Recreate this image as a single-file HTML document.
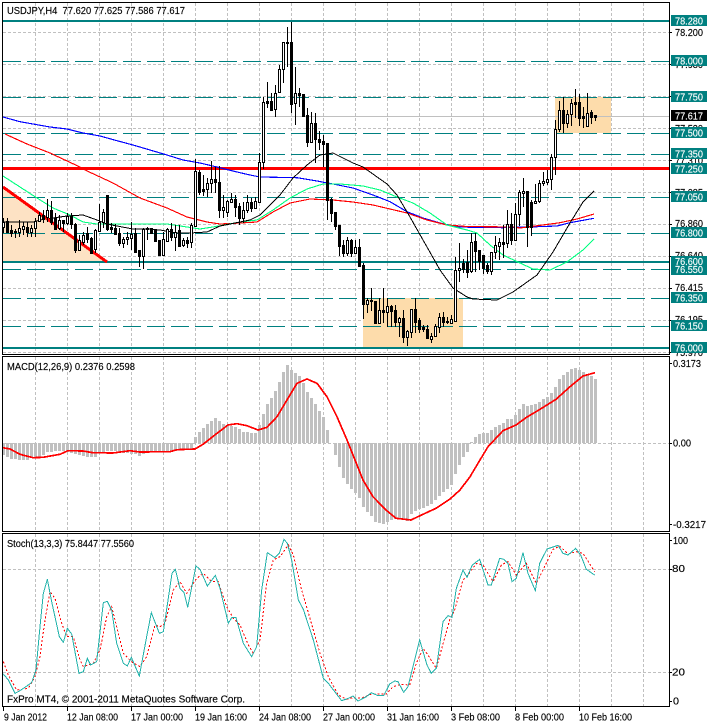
<!DOCTYPE html>
<html><head><meta charset="utf-8"><title>USDJPY,H4</title>
<style>
html,body{margin:0;padding:0;background:#fff;width:707px;height:724px;overflow:hidden}
svg{display:block}
text{font-family:"Liberation Sans",sans-serif;font-size:10.5px;fill:#000;stroke:#000;stroke-width:.15px}
text.wt{fill:#fff;stroke:#fff}
</style></head><body>
<svg width="707" height="724" viewBox="0 0 707 724" xmlns="http://www.w3.org/2000/svg" shape-rendering="crispEdges">
<!-- grid -->
<g fill="none" stroke="#c0c0c0" stroke-dasharray="3 2">
<path d="M35.5 3V353M67.5 3V353M99.5 3V353M131.5 3V353M163.5 3V353M195.5 3V353M227.5 3V353M259.5 3V353M291.5 3V353M323.5 3V353M355.5 3V353M387.5 3V353M419.5 3V353M451.5 3V353M483.5 3V353M515.5 3V353M547.5 3V353M579.5 3V353M611.5 3V353M643.5 3V353"/>
<path d="M3 32.5H669M3 64.5H669M3 96.5H669M3 128.5H669M3 160.5H669M3 192.5H669M3 224.5H669M3 256.5H669M3 288.5H669M3 320.5H669M3 352.5H669"/>
<path d="M35.5 357V531M67.5 357V531M99.5 357V531M131.5 357V531M163.5 357V531M195.5 357V531M227.5 357V531M259.5 357V531M291.5 357V531M323.5 357V531M355.5 357V531M387.5 357V531M419.5 357V531M451.5 357V531M483.5 357V531M515.5 357V531M547.5 357V531M579.5 357V531M611.5 357V531M643.5 357V531"/>
<path d="M3 443.5H669"/>
<path d="M35.5 534V706M67.5 534V706M99.5 534V706M131.5 534V706M163.5 534V706M195.5 534V706M227.5 534V706M259.5 534V706M291.5 534V706M323.5 534V706M355.5 534V706M387.5 534V706M419.5 534V706M451.5 534V706M483.5 534V706M515.5 534V706M547.5 534V706M579.5 534V706M611.5 534V706M643.5 534V706"/>
<path d="M3 569.5H669M3 672.5H669"/>
</g>
<!-- boxes -->
<polygon points="3,187 107,262 3,262" fill="#fde2c4"/>
<rect x="363" y="298" width="100" height="50" fill="#fddcab"/>
<rect x="555" y="97" width="56" height="36" fill="#fddcab"/>
<!-- price line -->
<path d="M3 116.5H669" stroke="#c0c0c0" fill="none"/>
<!-- levels -->
<g fill="none" stroke="#008080">
<path stroke-dasharray="18 6" d="M3 61.5H669M3 97.5H669M3 133.5H669M3 154.5H669M3 197.5H669M3 233.5H669M3 269.5H669M3 298.5H669M3 326.5H669"/>
<path stroke-width="2" d="M3 21H669M3 262H669M3 348H669"/>
</g>
<path d="M3 168.5H669" stroke="#f00" stroke-width="3" fill="none"/>
<!-- moving averages -->
<g fill="none" stroke-linejoin="round">
<polyline stroke="#0000ff" stroke-width="1.15" points="3,117 20,121.7 33,124 50,127 67,129 83,133 100,136 117,140.7 133,145 150,150 167,155 183,160 200,163 217,167 233,171 240,172.7 250,175 260,177 297,177.7 317,181 333,184 353,188 373,195 390,201.7 407,211.7 423,218 440,223 457,226.7 470,227.3 503,227.7 537,226.7 557,226 570,222.7 594,218.3"/>
<polyline stroke="#ff0000" stroke-width="1.15" points="5,134 27,144 50,153 80,167 85,170 113,183 140,198 167,208 187,217 207,222 220,224 240,223 257,222 273,212 290,203 310,199 333,200 353,202 373,205 390,209 407,213 427,220 447,225 467,226.5 513,227 520,228 543,225 560,222.7 577,219 594,214"/>
<polyline stroke="#00ff7f" stroke-width="1.1" points="3,176 20,187 37,198 53,208 70,215 83,222 97,224 133,224 167,224 187,227 200,229 213,227 240,222 257,220 273,210 290,198 307,189 323,184 340,184 363,186 380,190 397,197 413,203 430,213 447,225 467,230 477,233 490,245 503,255 520,263 533,269 550,270 567,262 583,250 594,239"/>
<polyline stroke="#000" stroke-width="1" points="3,222 33,222 40,220 53,218 67,216 83,215 97,220 107,224 117,226 133,229 147,229 160,230 177,233 190,233 207,232 220,226 240,222 250,220 260,215 280,195 293,178 307,165 320,155 333,153 353,163 363,167 387,184 397,195 410,217 427,247 440,270 453,288 467,297 473,299 497,300 513,292 537,275 553,252 570,223 583,202 594,191"/>
</g>
<!-- trend line -->
<path d="M3 187L107 262" stroke="#f00" stroke-width="3" fill="none"/>
<!-- wicks -->
<path fill="none" stroke="#000" d="M3.5 218V233M7.5 218V233M11.5 225V237M15.5 229V238M19.5 220V237M23.5 222V235M27.5 222V237M31.5 225V237M35.5 218V237M39.5 212V222M43.5 210V223M47.5 199V222M51.5 201V225M55.5 213V230M59.5 215V230M63.5 220V232M67.5 213V225M71.5 213V229M75.5 223V253M79.5 235V250M83.5 232V245M87.5 227V243M91.5 237V253M95.5 229V253M99.5 204V231M103.5 209V228M107.5 195V231M111.5 223V233M115.5 224V235M119.5 228V246M123.5 237V248M127.5 232V245M131.5 222V250M135.5 228V253M139.5 250V267M143.5 228V269M147.5 227V240M151.5 228V233M155.5 229V242M159.5 240V256M163.5 232V256M167.5 228V242M171.5 223V241M175.5 225V251M179.5 225V246M183.5 238V247M187.5 237V248M191.5 223V248M195.5 159V227M199.5 170V195M203.5 175V196M207.5 178V197M211.5 161V193M215.5 167V193M219.5 166V218M223.5 195V218M227.5 200V217M231.5 193V203M235.5 195V217M239.5 203V225M243.5 202V223M247.5 195V213M251.5 198V212M255.5 197V208M259.5 153V202M263.5 97V169M267.5 82V108M271.5 93V111M275.5 85V117M279.5 65V92M283.5 42V83M287.5 27V67M291.5 22V113M295.5 67V125M299.5 88V107M303.5 94V117M307.5 108V147M311.5 112V142M315.5 113V163M319.5 131V150M323.5 135V167M327.5 143V220M331.5 198V222M335.5 212V230M339.5 225V256M343.5 240V257M347.5 237V256M351.5 239V257M355.5 240V253M359.5 239V267M363.5 263V319M367.5 298V313M371.5 288V311M375.5 301V324M379.5 298V323M383.5 288V323M387.5 298V327M391.5 305V327M395.5 305V327M399.5 317V337M403.5 310V343M407.5 330V346M411.5 309V338M415.5 298V333M419.5 318V333M423.5 325V332M427.5 325V339M431.5 333V343M435.5 324V337M439.5 313V333M443.5 312V327M447.5 317V324M451.5 315V324M455.5 257V321M459.5 243V282M463.5 259V273M467.5 250V278M471.5 233V273M475.5 233V272M479.5 250V270M483.5 255V274M487.5 263V274M491.5 252V275M495.5 236V259M499.5 238V260M503.5 225V258M507.5 210V248M511.5 213V245M515.5 203V240M519.5 190V226M523.5 178V207M527.5 191V247M531.5 200V236M535.5 184V203M539.5 180V203M543.5 172V186M547.5 170V185M551.5 154V190M555.5 120V175M559.5 101V132M563.5 97V133M567.5 110V128M571.5 99V126M575.5 89V118M579.5 94V126M583.5 107V128M587.5 93V127M591.5 110V124M595.5 115V121"/>
<!-- white bodies -->
<path fill="#fff" stroke="#000" d="M2.5 222.5h2V227.5h-2zM18.5 228.5h2V232.5h-2zM22.5 226.5h2V229.5h-2zM30.5 228.5h2V232.5h-2zM34.5 221.5h2V228.5h-2zM38.5 215.5h2V221.5h-2zM46.5 210.5h2V217.5h-2zM58.5 220.5h2V228.5h-2zM66.5 216.5h2V223.5h-2zM78.5 240.5h2V250.5h-2zM82.5 235.5h2V242.5h-2zM94.5 230.5h2V249.5h-2zM98.5 222.5h2V231.5h-2zM102.5 212.5h2V222.5h-2zM122.5 239.5h2V243.5h-2zM126.5 237.5h2V239.5h-2zM130.5 234.5h2V238.5h-2zM142.5 229.5h2V256.5h-2zM162.5 239.5h2V255.5h-2zM166.5 229.5h2V241.5h-2zM174.5 232.5h2V237.5h-2zM182.5 240.5h2V245.5h-2zM190.5 225.5h2V242.5h-2zM194.5 171.5h2V226.5h-2zM206.5 183.5h2V189.5h-2zM210.5 179.5h2V183.5h-2zM222.5 207.5h2V210.5h-2zM226.5 201.5h2V212.5h-2zM230.5 199.5h2V202.5h-2zM242.5 210.5h2V218.5h-2zM246.5 202.5h2V210.5h-2zM254.5 201.5h2V208.5h-2zM258.5 162.5h2V202.5h-2zM262.5 102.5h2V162.5h-2zM274.5 93.5h2V109.5h-2zM278.5 69.5h2V92.5h-2zM282.5 42.5h2V69.5h-2zM294.5 93.5h2V103.5h-2zM310.5 123.5h2V142.5h-2zM346.5 240.5h2V253.5h-2zM354.5 247.5h2V253.5h-2zM366.5 300.5h2V304.5h-2zM378.5 310.5h2V323.5h-2zM386.5 306.5h2V312.5h-2zM398.5 318.5h2V322.5h-2zM406.5 331.5h2V337.5h-2zM410.5 309.5h2V332.5h-2zM430.5 336.5h2V339.5h-2zM434.5 326.5h2V336.5h-2zM438.5 317.5h2V327.5h-2zM450.5 319.5h2V323.5h-2zM454.5 270.5h2V321.5h-2zM458.5 268.5h2V270.5h-2zM470.5 242.5h2V271.5h-2zM490.5 252.5h2V271.5h-2zM494.5 245.5h2V252.5h-2zM498.5 242.5h2V246.5h-2zM506.5 224.5h2V243.5h-2zM514.5 214.5h2V240.5h-2zM518.5 192.5h2V214.5h-2zM522.5 191.5h2V193.5h-2zM534.5 201.5h2V203.5h-2zM538.5 183.5h2V201.5h-2zM542.5 181.5h2V183.5h-2zM546.5 179.5h2V182.5h-2zM550.5 157.5h2V179.5h-2zM554.5 129.5h2V157.5h-2zM558.5 110.5h2V129.5h-2zM566.5 114.5h2V123.5h-2zM570.5 103.5h2V114.5h-2zM586.5 113.5h2V126.5h-2z"/>
<!-- black bodies -->
<path fill="#000" stroke="#000" d="M6.5 221.5h2V232.5h-2zM10.5 230.5h2V233.5h-2zM14.5 231.5h2V232.5h-2zM26.5 227.5h2V232.5h-2zM42.5 215.5h2V218.5h-2zM50.5 210.5h2V222.5h-2zM54.5 218.5h2V229.5h-2zM62.5 220.5h2V223.5h-2zM70.5 216.5h2V224.5h-2zM74.5 224.5h2V250.5h-2zM86.5 233.5h2V239.5h-2zM90.5 238.5h2V253.5h-2zM106.5 195.5h2V229.5h-2zM110.5 227.5h2V229.5h-2zM114.5 228.5h2V234.5h-2zM118.5 233.5h2V243.5h-2zM134.5 233.5h2V252.5h-2zM138.5 250.5h2V256.5h-2zM146.5 228.5h2V229.5h-2zM150.5 228.5h2V233.5h-2zM154.5 230.5h2V241.5h-2zM158.5 240.5h2V255.5h-2zM170.5 229.5h2V237.5h-2zM178.5 230.5h2V246.5h-2zM186.5 240.5h2V243.5h-2zM198.5 172.5h2V192.5h-2zM202.5 189.5h2V191.5h-2zM214.5 179.5h2V182.5h-2zM218.5 182.5h2V210.5h-2zM234.5 199.5h2V207.5h-2zM238.5 206.5h2V218.5h-2zM250.5 202.5h2V208.5h-2zM266.5 101.5h2V103.5h-2zM270.5 101.5h2V110.5h-2zM286.5 42.5h2V43.5h-2zM290.5 42.5h2V104.5h-2zM298.5 93.5h2V95.5h-2zM302.5 94.5h2V116.5h-2zM306.5 115.5h2V142.5h-2zM314.5 123.5h2V139.5h-2zM318.5 139.5h2V142.5h-2zM322.5 141.5h2V144.5h-2zM326.5 143.5h2V200.5h-2zM330.5 199.5h2V213.5h-2zM334.5 212.5h2V226.5h-2zM338.5 225.5h2V246.5h-2zM342.5 245.5h2V253.5h-2zM350.5 240.5h2V253.5h-2zM358.5 247.5h2V266.5h-2zM362.5 265.5h2V304.5h-2zM370.5 300.5h2V301.5h-2zM374.5 301.5h2V323.5h-2zM382.5 310.5h2V312.5h-2zM390.5 306.5h2V311.5h-2zM394.5 310.5h2V322.5h-2zM402.5 318.5h2V337.5h-2zM414.5 309.5h2V322.5h-2zM418.5 320.5h2V329.5h-2zM422.5 327.5h2V329.5h-2zM426.5 329.5h2V338.5h-2zM442.5 317.5h2V322.5h-2zM446.5 321.5h2V322.5h-2zM462.5 263.5h2V269.5h-2zM466.5 262.5h2V272.5h-2zM474.5 241.5h2V251.5h-2zM478.5 250.5h2V261.5h-2zM482.5 255.5h2V268.5h-2zM486.5 265.5h2V271.5h-2zM502.5 242.5h2V244.5h-2zM510.5 224.5h2V240.5h-2zM526.5 191.5h2V227.5h-2zM530.5 202.5h2V227.5h-2zM562.5 110.5h2V123.5h-2zM574.5 102.5h2V104.5h-2zM578.5 102.5h2V118.5h-2zM582.5 116.5h2V118.5h-2zM590.5 112.5h2V117.5h-2zM594.5 115.5h2V117.5h-2z"/>
<!-- MACD bars -->
<path fill="none" stroke="#c0c0c0" stroke-width="3" d="M3.5 443V455M7.5 443V457M11.5 443V459M15.5 443V459M19.5 443V460M23.5 443V460M27.5 443V460M31.5 443V458M35.5 443V457M39.5 443V457M43.5 443V455M47.5 443V452M51.5 443V452M55.5 443V451M59.5 443V451M63.5 443V451M67.5 443V452M71.5 443V453M75.5 443V454M79.5 443V455M83.5 443V456M87.5 443V457M91.5 443V457M95.5 443V457M99.5 443V453M103.5 443V452M107.5 443V451M111.5 443V451M115.5 443V451M119.5 443V452M123.5 443V453M127.5 443V453M131.5 443V454M135.5 443V454M139.5 443V456M143.5 443V454M147.5 443V453M151.5 443V451M155.5 443V451M159.5 443V451M163.5 443V451M167.5 443V451M171.5 443V451M175.5 443V451M179.5 443V449M183.5 443V449M187.5 443V449M191.5 443V449M195.5 443V437M199.5 443V432M203.5 443V428M207.5 443V424M211.5 443V421M215.5 443V418M219.5 443V421M223.5 443V424M227.5 443V425M231.5 443V426M235.5 443V427M239.5 443V429M243.5 443V432M247.5 443V432M251.5 443V433M255.5 443V433M259.5 443V425M263.5 443V414M267.5 443V404M271.5 443V398M275.5 443V391M279.5 443V382M283.5 443V372M287.5 443V365M291.5 443V370M295.5 443V373M299.5 443V376M303.5 443V383M307.5 443V392M311.5 443V398M315.5 443V404M319.5 443V411M323.5 443V417M327.5 443V430M335.5 443V455M339.5 443V467M343.5 443V478M347.5 443V484M351.5 443V489M355.5 443V493M359.5 443V498M363.5 443V507M367.5 443V512M371.5 443V516M375.5 443V522M379.5 443V523M383.5 443V524M387.5 443V522M391.5 443V520M395.5 443V519M399.5 443V518M403.5 443V519M407.5 443V521M411.5 443V514M415.5 443V511M419.5 443V509M423.5 443V508M427.5 443V506M431.5 443V504M435.5 443V500M439.5 443V496M443.5 443V492M447.5 443V489M451.5 443V485M455.5 443V474M459.5 443V465M463.5 443V457M467.5 443V452M471.5 443V442M475.5 443V437M479.5 443V434M483.5 443V433M487.5 443V433M491.5 443V430M495.5 443V427M499.5 443V425M503.5 443V423M507.5 443V419M511.5 443V419M515.5 443V415M519.5 443V409M523.5 443V404M527.5 443V406M531.5 443V405M535.5 443V404M539.5 443V402M543.5 443V399M547.5 443V397M551.5 443V393M555.5 443V387M559.5 443V379M563.5 443V375M567.5 443V372M571.5 443V369M575.5 443V368M579.5 443V370M583.5 443V372M587.5 443V375M591.5 443V376M595.5 443V379"/>
<!-- MACD signal -->
<polyline fill="none" stroke="#f00" stroke-width="1.7" points="3,447.7 10,449 20,454.3 33,457.7 43,457.3 60,454.3 68,450.7 83,451 93,452.7 113,453 130,450.7 140,452 170,451.7 177,449.7 195,449 203,444.3 217,433.3 228,425 237,423.7 247,425.7 258,430 267,427.3 277,416.7 287,400 297,383.3 307,379 317,383.3 327,396.7 337,416.7 347,440 353,455 363,480 373,496.7 386,510 396,518.3 411,520 420,515.7 436,508.3 450,499 460,490 470,476.7 480,460 488,446.7 503,430.7 516,425 526,417.7 540,409.3 556,399.3 570,386.7 583,376 595,372.7"/>
<!-- Stochastic -->
<g transform="translate(0,530) scale(.33333)" fill="none">
<polyline stroke="#f00" stroke-width="3" stroke-dasharray="6 6" points="10,395 25,435 50,480 85,475 105,440 120,380 135,270 150,185 165,205 185,280 200,320 220,320 240,390 250,410 280,400 300,360 320,260 335,230 350,290 370,370 394,395 420,410 440,380 465,285 480,290 495,280 520,180 540,155 560,190 590,145 610,130 635,155 655,155 680,230 700,265 720,285 745,345 760,370 780,330 800,160 820,90 840,80 865,45 880,75 905,180 930,265 960,370 985,440 1015,495 1040,508 1059,503 1084,505 1114,492 1159,492 1179,470 1204,463 1229,465 1249,400 1269,355 1284,375 1309,415 1324,360 1349,270 1364,240 1389,150 1404,135 1429,100 1449,105 1479,155 1504,105 1524,95 1549,135 1579,100 1609,160 1629,120 1659,58 1679,48 1704,72 1729,65 1749,70 1784,125"/>
<polyline stroke="#20b2aa" stroke-width="3" points="10,432 25,450 45,490 60,482 95,458 108,420 120,290 130,190 142,148 155,215 178,320 190,337 202,295 215,312 237,430 250,425 262,385 272,405 290,395 310,218 322,214 335,240 350,340 370,400 382,408 394,382 418,438 440,320 454,248 478,310 490,305 516,130 526,118 540,175 552,187 563,232 588,108 600,118 622,168 646,136 660,175 685,280 695,263 708,263 730,340 755,380 770,350 785,180 802,68 825,83 838,70 852,28 862,40 875,90 895,210 910,238 940,330 970,445 985,460 1025,512 1045,505 1059,498 1074,513 1099,500 1114,488 1134,497 1151,497 1169,462 1184,453 1194,455 1211,487 1224,470 1259,330 1281,405 1294,430 1309,415 1329,275 1344,257 1356,262 1369,175 1389,120 1401,142 1417,105 1439,88 1464,165 1474,165 1499,85 1511,88 1524,100 1536,155 1549,145 1569,68 1584,130 1606,182 1619,100 1641,57 1674,46 1689,70 1704,75 1727,55 1742,75 1759,118 1784,135"/>
</g>
<!-- frames -->
<g fill="none" stroke="#000">
<rect x="2.5" y="2.5" width="667" height="352"/>
<rect x="2.5" y="356.5" width="667" height="175"/>
<rect x="2.5" y="533.5" width="667" height="173"/>
<path d="M669 32.5h3M669 64.5h3M669 96.5h3M669 128.5h3M669 160.5h3M669 192.5h3M669 224.5h3M669 256.5h3M669 288.5h3M669 320.5h3M669 352.5h3M669 363.5h3M669 443.5h3M669 524.5h3M669 540.5h3M669 569.5h3M669 672.5h3M669 701.5h3"/>
<path d="M3.5 707v4M67.5 707v4M131.5 707v4M195.5 707v4M259.5 707v4M323.5 707v4M387.5 707v4M451.5 707v4M515.5 707v4M579.5 707v4"/>
</g>
<!-- hidden scale text -->
<g>
<text x="675" y="36" textLength="28" lengthAdjust="spacingAndGlyphs">78.200</text>
<text x="675" y="68" textLength="28" lengthAdjust="spacingAndGlyphs">77.980</text>
<text x="675" y="132" textLength="28" lengthAdjust="spacingAndGlyphs">77.530</text>
<text x="675" y="164" textLength="28" lengthAdjust="spacingAndGlyphs">77.310</text>
<text x="675" y="196" textLength="28" lengthAdjust="spacingAndGlyphs">77.085</text>
<text x="675" y="227" textLength="28" lengthAdjust="spacingAndGlyphs">76.860</text>
<text x="675" y="259" textLength="28" lengthAdjust="spacingAndGlyphs">76.640</text>
<text x="675" y="291" textLength="28" lengthAdjust="spacingAndGlyphs">76.415</text>
<text x="675" y="323" textLength="28" lengthAdjust="spacingAndGlyphs">76.195</text>
<text x="675" y="356" textLength="28" lengthAdjust="spacingAndGlyphs">75.970</text>
</g>
<!-- level labels -->
<g fill="#008080">
<rect x="671" y="15" width="36" height="11"/>
<rect x="671" y="55" width="36" height="11"/>
<rect x="671" y="91" width="36" height="11"/>
<rect x="671" y="127" width="36" height="11"/>
<rect x="671" y="148" width="36" height="11"/>
<rect x="671" y="163" width="36" height="11"/>
<rect x="671" y="191" width="36" height="11"/>
<rect x="671" y="227" width="36" height="11"/>
<rect x="671" y="256" width="36" height="11"/>
<rect x="671" y="264" width="36" height="11"/>
<rect x="671" y="292" width="36" height="11"/>
<rect x="671" y="320" width="36" height="11"/>
<rect x="671" y="342" width="36" height="11"/>
</g>
<rect x="671" y="110" width="36" height="11" fill="#000"/>
<g>
<text class="wt" x="675" y="24.5" textLength="28" lengthAdjust="spacingAndGlyphs">78.280</text>
<text class="wt" x="675" y="64.5" textLength="28" lengthAdjust="spacingAndGlyphs">78.000</text>
<text class="wt" x="675" y="100.5" textLength="28" lengthAdjust="spacingAndGlyphs">77.750</text>
<text class="wt" x="675" y="119.5" textLength="28" lengthAdjust="spacingAndGlyphs">77.617</text>
<text class="wt" x="675" y="136.5" textLength="28" lengthAdjust="spacingAndGlyphs">77.500</text>
<text class="wt" x="675" y="157.5" textLength="28" lengthAdjust="spacingAndGlyphs">77.350</text>
<text class="wt" x="675" y="172.5" textLength="28" lengthAdjust="spacingAndGlyphs">77.250</text>
<text class="wt" x="675" y="200.5" textLength="28" lengthAdjust="spacingAndGlyphs">77.050</text>
<text class="wt" x="675" y="236.5" textLength="28" lengthAdjust="spacingAndGlyphs">76.800</text>
<text class="wt" x="675" y="265" textLength="28" lengthAdjust="spacingAndGlyphs">76.600</text>
<text class="wt" x="675" y="273" textLength="28" lengthAdjust="spacingAndGlyphs">76.550</text>
<text class="wt" x="675" y="301.5" textLength="28" lengthAdjust="spacingAndGlyphs">76.350</text>
<text class="wt" x="675" y="329.5" textLength="28" lengthAdjust="spacingAndGlyphs">76.150</text>
<text class="wt" x="675" y="351.5" textLength="28" lengthAdjust="spacingAndGlyphs">76.000</text>
</g>
<!-- indicator texts -->
<g shape-rendering="auto">
<text x="7" y="14" textLength="178" lengthAdjust="spacingAndGlyphs" xml:space="preserve">USDJPY,H4  77.620 77.625 77.586 77.617</text>
<text x="7" y="370" textLength="128" lengthAdjust="spacingAndGlyphs">MACD(12,26,9) 0.2376 0.2598</text>
<text x="7" y="547" textLength="127" lengthAdjust="spacingAndGlyphs">Stoch(13,3,3) 75.8447 77.5560</text>
<text x="7" y="702.5" textLength="238" lengthAdjust="spacingAndGlyphs">FxPro MT4, © 2001-2011 MetaQuotes Software Corp.</text>
<text x="673" y="367" textLength="28" lengthAdjust="spacingAndGlyphs">0.3173</text>
<text x="673" y="446.5" textLength="18" lengthAdjust="spacingAndGlyphs">0.00</text>
<text x="673" y="528" textLength="33" lengthAdjust="spacingAndGlyphs">-0.3217</text>
<text x="673" y="544" textLength="15" lengthAdjust="spacingAndGlyphs">100</text>
<text x="672" y="572" textLength="13" lengthAdjust="spacingAndGlyphs">80</text>
<text x="672" y="675.5" textLength="13" lengthAdjust="spacingAndGlyphs">20</text>
<text x="673" y="704.5" textLength="6" lengthAdjust="spacingAndGlyphs">0</text>
<text x="4" y="720.5" textLength="43" lengthAdjust="spacingAndGlyphs">9 Jan 2012</text>
<text x="67" y="720.5" textLength="51" lengthAdjust="spacingAndGlyphs">12 Jan 08:00</text>
<text x="131" y="720.5" textLength="52" lengthAdjust="spacingAndGlyphs">17 Jan 00:00</text>
<text x="195" y="720.5" textLength="52" lengthAdjust="spacingAndGlyphs">19 Jan 16:00</text>
<text x="259" y="720.5" textLength="52" lengthAdjust="spacingAndGlyphs">24 Jan 08:00</text>
<text x="323" y="720.5" textLength="52" lengthAdjust="spacingAndGlyphs">27 Jan 00:00</text>
<text x="387" y="720.5" textLength="52" lengthAdjust="spacingAndGlyphs">31 Jan 16:00</text>
<text x="451" y="720.5" textLength="49" lengthAdjust="spacingAndGlyphs">3 Feb 08:00</text>
<text x="515" y="720.5" textLength="49" lengthAdjust="spacingAndGlyphs">8 Feb 00:00</text>
<text x="579" y="720.5" textLength="53" lengthAdjust="spacingAndGlyphs">10 Feb 16:00</text>
</g>
</svg>
</body></html>
